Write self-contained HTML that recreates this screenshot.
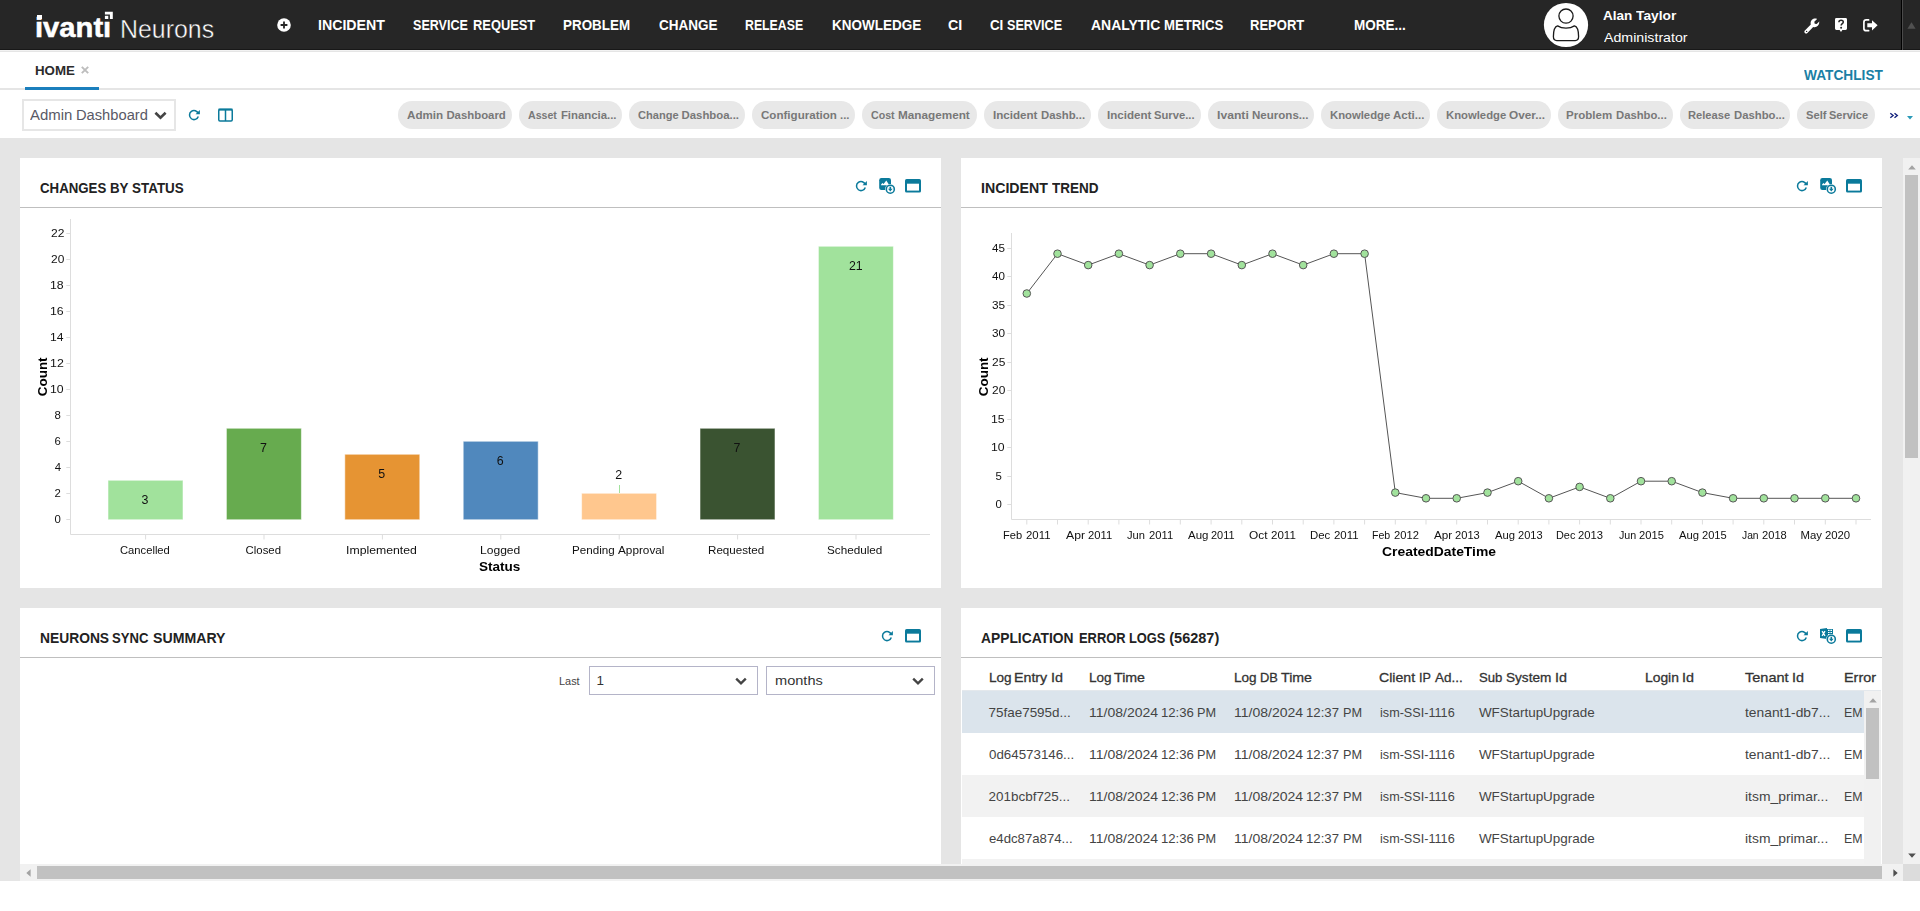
<!DOCTYPE html>
<html lang="en">
<head>
<meta charset="utf-8">
<title>Ivanti Neurons - Admin Dashboard</title>
<style>
*{box-sizing:border-box;margin:0;padding:0}
html,body{width:1920px;height:911px;overflow:hidden;background:#fff}
body{position:relative;font-family:"Liberation Sans",sans-serif;color:#333}
.t{position:absolute;white-space:pre;line-height:1;transform-origin:0 0;font-family:"Liberation Sans",sans-serif}
.abs{position:absolute}
#hdr{position:absolute;left:0;top:0;width:1920px;height:50px;background:#262626;color:#fff;border-bottom:1px solid #181818}
#hdr .t{color:#fff}
#work{position:absolute;left:0;top:138px;width:1920px;height:743px;background:#e5e5e5;overflow:hidden}
.panel{position:absolute;background:#fff}
.phl{position:absolute;left:0;right:0;top:49px;height:1px;background:#bfbfbf}
.pill{position:absolute;top:101px;height:28px;border-radius:14px;background:#e8e8e8}
.pill .t{color:#777}
svg{position:absolute;overflow:visible}
.row{position:absolute;left:962px;width:902px;height:42px}
</style>
</head>
<body>

<div id="hdr">
<span class="t" style="left:35.31px;top:12px;font-size:27.60px;line-height:31px;font-weight:700;transform:scaleX(1.0577);-webkit-text-stroke:0.5px #fff;">ivantı</span>
<svg style="left:104px;top:11px" width="10" height="9" viewBox="104 11 10 9"><path d="M104.900 11.800H112.800V19H109.900V14.400H104.900Z" fill="#fff"/><rect x="104.900" y="15.800" width="3.400" height="3.200" fill="#fff"/></svg>
<div class="abs" style="left:36.500px;top:14.600px;width:5.200px;height:4.800px;background:#fff"></div>
<span class="t" style="left:119.56px;top:15px;font-size:25.90px;line-height:28px;transform:scaleX(0.9620);-webkit-text-stroke:0.45px #262626;">Neurons</span>
<svg style="left:277px;top:18px" width="14" height="14" viewBox="0 0 14 14"><circle cx="7" cy="7" r="6.8" fill="#fff"/><path d="M7 3.6V10.4M3.6 7H10.4" stroke="#262626" stroke-width="1.8"/></svg>
<span class="t" style="left:318.04px;top:17px;font-size:14.49px;line-height:16px;font-weight:700;transform:scaleX(0.9791);">INCIDENT</span>
<span class="t" style="left:413.16px;top:17px;font-size:14.49px;line-height:16px;font-weight:700;transform:scaleX(0.8677);">SERVICE</span><span class="t" style="left:472.66px;top:17px;font-size:14.49px;line-height:16px;font-weight:700;transform:scaleX(0.8889);">REQUEST</span>
<span class="t" style="left:562.86px;top:17px;font-size:14.49px;line-height:16px;font-weight:700;transform:scaleX(0.9260);">PROBLEM</span>
<span class="t" style="left:658.58px;top:17px;font-size:14.49px;line-height:16px;font-weight:700;transform:scaleX(0.9334);">CHANGE</span>
<span class="t" style="left:745.08px;top:17px;font-size:14.49px;line-height:16px;font-weight:700;transform:scaleX(0.8500);">RELEASE</span>
<span class="t" style="left:831.60px;top:17px;font-size:14.49px;line-height:16px;font-weight:700;transform:scaleX(0.9311);">KNOWLEDGE</span>
<span class="t" style="left:948.07px;top:17px;font-size:14.49px;line-height:16px;font-weight:700;transform:scaleX(0.9829);">CI</span>
<span class="t" style="left:989.80px;top:17px;font-size:14.49px;line-height:16px;font-weight:700;transform:scaleX(0.9200);">CI</span><span class="t" style="left:1007.36px;top:17px;font-size:14.49px;line-height:16px;font-weight:700;transform:scaleX(0.8697);">SERVICE</span>
<span class="t" style="left:1090.81px;top:17px;font-size:14.49px;line-height:16px;font-weight:700;transform:scaleX(0.9630);">ANALYTIC</span><span class="t" style="left:1164.34px;top:17px;font-size:14.49px;line-height:16px;font-weight:700;transform:scaleX(0.9087);">METRICS</span>
<span class="t" style="left:1250.46px;top:17px;font-size:14.49px;line-height:16px;font-weight:700;transform:scaleX(0.8993);">REPORT</span>
<span class="t" style="left:1354.30px;top:17px;font-size:14.49px;line-height:16px;font-weight:700;transform:scaleX(0.9334);">MORE...</span>
<svg style="left:1544px;top:3px" width="44" height="44" viewBox="0 0 44 44"><circle cx="22" cy="22" r="22.1" fill="#fff"/>
<circle cx="22" cy="13.1" r="7.1" fill="none" stroke="#1a1a1a" stroke-width="1.3"/>
<path d="M13.6 22.9C10.6 23.6 9.4 27.5 9.4 33.6C9.4 36.2 10.6 37.6 12.8 37.6H31.2C33.4 37.6 34.6 36.2 34.6 33.6C34.6 27.5 33.4 23.6 30.4 22.9C28.2 24.4 25.4 25.2 22 25.2C18.6 25.2 15.8 24.4 13.6 22.9Z" fill="none" stroke="#1a1a1a" stroke-width="1.3" stroke-linejoin="round"/></svg>
<span class="t" style="left:1603.48px;top:8px;font-size:13.45px;line-height:15px;font-weight:700;transform:scaleX(1.0080);">Alan</span><span class="t" style="left:1636.45px;top:8px;font-size:13.45px;line-height:15px;font-weight:700;transform:scaleX(1.0239);">Taylor</span>
<span class="t" style="left:1603.71px;top:30px;font-size:13.45px;line-height:15px;transform:scaleX(1.0557);">Administrator</span>
<svg style="left:1804px;top:17.5px" width="16" height="16" viewBox="0 0 16 16"><path d="M15.2 4.6c0 2.6-2.1 4.6-4.6 4.6-.5 0-1-.1-1.400-.2L3.400 14.900c-.7.7-1.800.7-2.500 0s-.7-1.800 0-2.500L6.800 6.500C6.700 6 6.600 5.600 6.600 5.100 6.600 2.500 8.700.5 11.200.5c.7 0 1.300.1 1.900.4L10.300 3.700l.4 2 2 .4 2.800-2.800c-.2.400-.3.800-.3 1.300zM2.600 14.100a.7.7 0 1 0 0-1.400.7.7 0 0 0 0 1.400z" fill="#fff" fill-rule="evenodd"/></svg>
<svg style="left:1835px;top:18.400px" width="12" height="15" viewBox="0 0 12 15"><path d="M1.400 0H10.600Q12 0 12 1.400V10.600Q12 12 10.600 12H7.400L6 13.900 4.600 12H1.400Q0 12 0 10.600V1.400Q0 0 1.400 0Z" fill="#fff"/>
<path d="M3.900 4.300C3.900 2.900 4.800 2.200 6.100 2.200 7.400 2.200 8.300 2.900 8.300 4 8.300 5.700 6.100 5.600 6.100 7.600" fill="none" stroke="#262626" stroke-width="1.500"/><circle cx="6.100" cy="9.700" r="1" fill="#262626"/></svg>
<svg style="left:1862.5px;top:19px" width="15" height="13" viewBox="0 0 15 13"><path d="M5.600 0.900H3.200Q0.900 0.900 0.900 3.200V9.400Q0.900 11.700 3.200 11.700H5.600" fill="none" stroke="#fff" stroke-width="1.700" stroke-linecap="round"/>
<path d="M4.300 4.300H9V1.200L14.600 6.300 9 11.400V8.300H4.300Z" fill="#fff"/></svg>
<div class="abs" style="left:1901px;top:0;width:1px;height:50px;background:#000"></div>
<div class="abs" style="left:1902px;top:0;width:1px;height:50px;background:#4a4a4a"></div>
<svg style="left:1907px;top:22px" width="9" height="7" viewBox="0 0 9 7"><path d="M4.500 0.300L8.600 6.800H0.400Z" fill="#505050"/></svg>
</div>
<div class="abs" style="left:0;top:50px;width:1920px;height:1px;background:#f2f2f2"></div>
<div class="abs" style="left:0;top:51px;width:1920px;height:1px;background:#e5e5e5"></div>
<div class="abs" style="left:0;top:88px;width:1920px;height:2px;background:#e5e5e5"></div>
<div class="abs" style="left:25px;top:87px;width:74px;height:3px;background:#1b7fbd"></div>
<span class="t" style="left:35.18px;top:63px;font-size:13.45px;line-height:15px;font-weight:700;transform:scaleX(0.9901);color:#2b2b2b;">HOME</span>
<svg style="left:81px;top:66px" width="8" height="8" viewBox="0 0 8 8"><path d="M0.800 0.800L7.200 7.200M7.200 0.800L0.800 7.200" stroke="#bdbdbd" stroke-width="1.900"/></svg>
<span class="t" style="left:1803.88px;top:67px;font-size:14.49px;line-height:16px;font-weight:700;transform:scaleX(0.9464);color:#1b7fa5;">WATCHLIST</span>
<div class="abs" style="left:22px;top:99px;width:154px;height:32px;border:2px solid #e6e6e6;background:#fff"></div>
<span class="t" style="left:29.97px;top:107px;font-size:14.49px;line-height:16px;transform:scaleX(1.0326);color:#595966;">Admin</span><span class="t" style="left:76.12px;top:107px;font-size:14.49px;line-height:16px;transform:scaleX(1.0141);color:#595966;">Dashboard</span>
<svg style="left:154px;top:111px" width="13" height="9" viewBox="0 0 13 9"><path d="M1.400 1.800L6.500 6.800 11.600 1.800" fill="none" stroke="#444" stroke-width="2.600"/></svg>
<svg style="left:186.6px;top:108px" width="14" height="14" viewBox="-7 -7 14 14"><path d="M4.300 -1.300A4.500 4.500 0 1 0 4.300 1.500" fill="none" stroke="#0b7a9b" stroke-width="1.500"/><path d="M5.900 -5.100V-0.700H1.500Z" fill="#0b7a9b"/></svg>
<svg style="left:218px;top:108px" width="15" height="14" viewBox="0 0 15 14"><rect x="0.750" y="1.500" width="13.500" height="11.500" rx="1.200" fill="none" stroke="#0b7a9b" stroke-width="1.500"/><path d="M0.500 1.500H14.500" stroke="#0b7a9b" stroke-width="2"/><path d="M7.500 1.500V13" stroke="#0b7a9b" stroke-width="1.500"/></svg>
<div class="pill" style="left:398.0px;width:113.8px"></div>
<span class="t" style="left:407.15px;top:109px;font-size:11.38px;line-height:12px;font-weight:700;transform:scaleX(1.0218);color:#787878;">Admin</span><span class="t" style="left:446.38px;top:109px;font-size:11.38px;line-height:12px;font-weight:700;color:#787878;">Dashboard</span>
<div class="pill" style="left:519.2px;width:102.6px"></div>
<span class="t" style="left:528.26px;top:109px;font-size:11.38px;line-height:12px;font-weight:700;transform:scaleX(0.9313);color:#787878;">Asset</span><span class="t" style="left:560.91px;top:109px;font-size:11.38px;line-height:12px;font-weight:700;color:#787878;">Financia...</span>
<div class="pill" style="left:629.2px;width:115.6px"></div>
<span class="t" style="left:637.72px;top:109px;font-size:11.38px;line-height:12px;font-weight:700;transform:scaleX(0.9734);color:#787878;">Change</span><span class="t" style="left:681.53px;top:109px;font-size:11.38px;line-height:12px;font-weight:700;color:#787878;">Dashboa...</span>
<div class="pill" style="left:752.0px;width:102.7px"></div>
<span class="t" style="left:760.50px;top:109px;font-size:11.38px;line-height:12px;font-weight:700;transform:scaleX(1.0180);color:#787878;">Configuration</span><span class="t" style="left:839.85px;top:109px;font-size:11.38px;line-height:12px;font-weight:700;transform:scaleX(0.9959);color:#787878;">...</span>
<div class="pill" style="left:862.0px;width:114.8px"></div>
<span class="t" style="left:870.61px;top:109px;font-size:11.38px;line-height:12px;font-weight:700;transform:scaleX(0.9358);color:#787878;">Cost</span><span class="t" style="left:898.13px;top:109px;font-size:11.38px;line-height:12px;font-weight:700;transform:scaleX(1.0321);color:#787878;">Management</span>
<div class="pill" style="left:984.2px;width:106.6px"></div>
<span class="t" style="left:992.66px;top:109px;font-size:11.38px;line-height:12px;font-weight:700;transform:scaleX(1.0197);color:#787878;">Incident</span><span class="t" style="left:1040.88px;top:109px;font-size:11.38px;line-height:12px;font-weight:700;transform:scaleX(0.9950);color:#787878;">Dashb...</span>
<div class="pill" style="left:1098.0px;width:102.8px"></div>
<span class="t" style="left:1106.51px;top:109px;font-size:11.38px;line-height:12px;font-weight:700;transform:scaleX(1.0165);color:#787878;">Incident</span><span class="t" style="left:1154.36px;top:109px;font-size:11.38px;line-height:12px;font-weight:700;transform:scaleX(0.9859);color:#787878;">Surve...</span>
<div class="pill" style="left:1208.0px;width:106.2px"></div>
<span class="t" style="left:1216.62px;top:109px;font-size:11.38px;line-height:12px;font-weight:700;transform:scaleX(1.0709);color:#787878;">Ivanti</span><span class="t" style="left:1252.15px;top:109px;font-size:11.38px;line-height:12px;font-weight:700;transform:scaleX(1.0147);color:#787878;">Neurons...</span>
<div class="pill" style="left:1321.2px;width:108.8px"></div>
<span class="t" style="left:1330.13px;top:109px;font-size:11.38px;line-height:12px;font-weight:700;transform:scaleX(0.9921);color:#787878;">Knowledge</span><span class="t" style="left:1392.94px;top:109px;font-size:11.38px;line-height:12px;font-weight:700;transform:scaleX(1.0123);color:#787878;">Acti...</span>
<div class="pill" style="left:1437.2px;width:113.6px"></div>
<span class="t" style="left:1445.65px;top:109px;font-size:11.38px;line-height:12px;font-weight:700;transform:scaleX(0.9923);color:#787878;">Knowledge</span><span class="t" style="left:1508.87px;top:109px;font-size:11.38px;line-height:12px;font-weight:700;transform:scaleX(1.0374);color:#787878;">Over...</span>
<div class="pill" style="left:1558.0px;width:114.8px"></div>
<span class="t" style="left:1566.44px;top:109px;font-size:11.38px;line-height:12px;font-weight:700;transform:scaleX(1.0148);color:#787878;">Problem</span><span class="t" style="left:1616.01px;top:109px;font-size:11.38px;line-height:12px;font-weight:700;transform:scaleX(0.9918);color:#787878;">Dashbo...</span>
<div class="pill" style="left:1680.2px;width:109.8px"></div>
<span class="t" style="left:1688.40px;top:109px;font-size:11.38px;line-height:12px;font-weight:700;transform:scaleX(0.9800);color:#787878;">Release</span><span class="t" style="left:1733.79px;top:109px;font-size:11.38px;line-height:12px;font-weight:700;transform:scaleX(0.9941);color:#787878;">Dashbo...</span>
<div class="pill" style="left:1797.0px;width:78.0px"></div>
<span class="t" style="left:1805.73px;top:109px;font-size:11.38px;line-height:12px;font-weight:700;transform:scaleX(0.9819);color:#787878;">Self</span><span class="t" style="left:1829.05px;top:109px;font-size:11.38px;line-height:12px;font-weight:700;transform:scaleX(0.9653);color:#787878;">Service</span>
<svg style="left:1889px;top:112px" width="10" height="7" viewBox="1889 112 10 7"><path d="M1890.300 113.200L1893.100 115.500 1890.300 117.800M1894.500 113.200L1897.300 115.500 1894.500 117.800" fill="none" stroke="#16237e" stroke-width="1.400"/></svg>
<svg style="left:1907px;top:115.500px" width="6" height="4" viewBox="0 0 6 4"><path d="M0 0H6L3 3.600Z" fill="#2a9ab8"/></svg>
<div id="work"></div>
<div class="panel" style="left:20px;top:158px;width:921px;height:430px"><div class="phl"></div></div>
<span class="t" style="left:40.37px;top:180px;font-size:14.49px;line-height:16px;font-weight:700;transform:scaleX(0.9149);color:#222;">CHANGES</span><span class="t" style="left:109.95px;top:180px;font-size:14.49px;line-height:16px;font-weight:700;transform:scaleX(0.9200);color:#222;">BY</span><span class="t" style="left:131.97px;top:180px;font-size:14.49px;line-height:16px;font-weight:700;transform:scaleX(0.9278);color:#222;">STATUS</span>
<svg style="left:853.8px;top:179px" width="14" height="14" viewBox="-7 -7 14 14"><path d="M4.300 -1.300A4.500 4.500 0 1 0 4.300 1.500" fill="none" stroke="#0b7a9b" stroke-width="1.500"/><path d="M5.900 -5.100V-0.700H1.500Z" fill="#0b7a9b"/></svg>
<svg style="left:879px;top:178px" width="17" height="17" viewBox="0 0 17 17"><rect x="0.200" y="0" width="11.800" height="12" rx="2.200" fill="#0b7a9b"/><path d="M2 6.700L3.300 4.900 4.600 6.100 7.300 2.400 10 6.700V7.300H2Z" fill="#fff"/><circle cx="11.300" cy="11.200" r="5.300" fill="#fff"/><circle cx="11.300" cy="11.200" r="4" fill="#fff" stroke="#0b7a9b" stroke-width="1.600"/><path d="M10.500 8.700H12.100V10.800H13.600L11.300 13.600 9 10.800H10.500Z" fill="#0b7a9b"/></svg>
<svg style="left:905px;top:179px" width="16" height="14" viewBox="0 0 16 14"><rect x="0" y="0" width="16" height="13.600" rx="1.600" fill="#0b7a9b"/><rect x="2" y="4.700" width="12" height="6.900" fill="#fff"/></svg>
<div class="panel" style="left:961px;top:158px;width:921px;height:430px"><div class="phl"></div></div>
<span class="t" style="left:981.13px;top:180px;font-size:14.49px;line-height:16px;font-weight:700;transform:scaleX(0.9775);color:#222;">INCIDENT</span><span class="t" style="left:1051.63px;top:180px;font-size:14.49px;line-height:16px;font-weight:700;transform:scaleX(0.9339);color:#222;">TREND</span>
<svg style="left:1794.8px;top:179px" width="14" height="14" viewBox="-7 -7 14 14"><path d="M4.300 -1.300A4.500 4.500 0 1 0 4.300 1.500" fill="none" stroke="#0b7a9b" stroke-width="1.500"/><path d="M5.900 -5.100V-0.700H1.500Z" fill="#0b7a9b"/></svg>
<svg style="left:1820px;top:178px" width="17" height="17" viewBox="0 0 17 17"><rect x="0.200" y="0" width="11.800" height="12" rx="2.200" fill="#0b7a9b"/><path d="M2 6.700L3.300 4.900 4.600 6.100 7.300 2.400 10 6.700V7.300H2Z" fill="#fff"/><circle cx="11.300" cy="11.200" r="5.300" fill="#fff"/><circle cx="11.300" cy="11.200" r="4" fill="#fff" stroke="#0b7a9b" stroke-width="1.600"/><path d="M10.500 8.700H12.100V10.800H13.600L11.300 13.600 9 10.800H10.500Z" fill="#0b7a9b"/></svg>
<svg style="left:1846px;top:179px" width="16" height="14" viewBox="0 0 16 14"><rect x="0" y="0" width="16" height="13.600" rx="1.600" fill="#0b7a9b"/><rect x="2" y="4.700" width="12" height="6.900" fill="#fff"/></svg>
<div class="panel" style="left:20px;top:608px;width:921px;height:256px"><div class="phl"></div></div>
<span class="t" style="left:39.78px;top:630px;font-size:14.49px;line-height:16px;font-weight:700;transform:scaleX(0.9538);color:#222;">NEURONS</span><span class="t" style="left:112.37px;top:630px;font-size:14.49px;line-height:16px;font-weight:700;transform:scaleX(0.9053);color:#222;">SYNC</span><span class="t" style="left:152.97px;top:630px;font-size:14.49px;line-height:16px;font-weight:700;transform:scaleX(0.9756);color:#222;">SUMMARY</span>
<svg style="left:880px;top:629px" width="14" height="14" viewBox="-7 -7 14 14"><path d="M4.300 -1.300A4.500 4.500 0 1 0 4.300 1.500" fill="none" stroke="#0b7a9b" stroke-width="1.500"/><path d="M5.900 -5.100V-0.700H1.500Z" fill="#0b7a9b"/></svg>
<svg style="left:905px;top:629px" width="16" height="14" viewBox="0 0 16 14"><rect x="0" y="0" width="16" height="13.600" rx="1.600" fill="#0b7a9b"/><rect x="2" y="4.700" width="12" height="6.900" fill="#fff"/></svg>
<div class="panel" style="left:961px;top:608px;width:921px;height:256px"><div class="phl"></div></div>
<span class="t" style="left:980.94px;top:630px;font-size:14.49px;line-height:16px;font-weight:700;transform:scaleX(0.9533);color:#222;">APPLICATION</span><span class="t" style="left:1078.64px;top:630px;font-size:14.49px;line-height:16px;font-weight:700;transform:scaleX(0.8905);color:#222;">ERROR</span><span class="t" style="left:1129.49px;top:630px;font-size:14.49px;line-height:16px;font-weight:700;transform:scaleX(0.8882);color:#222;">LOGS</span><span class="t" style="left:1169.30px;top:630px;font-size:14.49px;line-height:16px;font-weight:700;color:#222;">(56287)</span>
<svg style="left:1794.8px;top:629px" width="14" height="14" viewBox="-7 -7 14 14"><path d="M4.300 -1.300A4.500 4.500 0 1 0 4.300 1.500" fill="none" stroke="#0b7a9b" stroke-width="1.500"/><path d="M5.900 -5.100V-0.700H1.500Z" fill="#0b7a9b"/></svg>
<svg style="left:1820px;top:628px" width="17" height="17" viewBox="0 0 17 17"><path d="M0 1.100L7 0V11L0 9.900Z" fill="#0b7a9b"/><rect x="6.500" y="1" width="6.500" height="8" fill="#0b7a9b"/><path d="M8 2.400H9.600M10.400 2.400H12M8 4.500H9.600M10.400 4.500H12M8 6.600H9.600" stroke="#fff" stroke-width="1.100"/><path d="M2.100 3.200L5 7.800M5 3.200L2.100 7.800" stroke="#fff" stroke-width="1.300"/><circle cx="11.300" cy="11.200" r="5.300" fill="#fff"/><circle cx="11.300" cy="11.200" r="4" fill="#fff" stroke="#0b7a9b" stroke-width="1.600"/><path d="M10.500 8.700H12.100V10.800H13.600L11.300 13.600 9 10.800H10.500Z" fill="#0b7a9b"/></svg>
<svg style="left:1846px;top:629px" width="16" height="14" viewBox="0 0 16 14"><rect x="0" y="0" width="16" height="13.600" rx="1.600" fill="#0b7a9b"/><rect x="2" y="4.700" width="12" height="6.900" fill="#fff"/></svg>
<div id="charts" style="position:absolute;left:0;top:0;width:1903px;height:600px;will-change:transform">
<svg style="left:0;top:0" width="960" height="600" viewBox="0 0 960 600">
<path d="M70.500 219V534.500H930" fill="none" stroke="#dddddd" stroke-width="1"/>
<path d="M66.300 519.5H70.500" stroke="#dddddd"/>
<path d="M66.300 493.5H70.500" stroke="#dddddd"/>
<path d="M66.300 467.5H70.500" stroke="#dddddd"/>
<path d="M66.300 441.5H70.500" stroke="#dddddd"/>
<path d="M66.300 415.5H70.500" stroke="#dddddd"/>
<path d="M66.300 389.5H70.500" stroke="#dddddd"/>
<path d="M66.300 363.5H70.500" stroke="#dddddd"/>
<path d="M66.300 337.5H70.500" stroke="#dddddd"/>
<path d="M66.300 311.5H70.500" stroke="#dddddd"/>
<path d="M66.300 285.5H70.500" stroke="#dddddd"/>
<path d="M66.300 259.5H70.500" stroke="#dddddd"/>
<path d="M66.300 233.5H70.500" stroke="#dddddd"/>
<path d="M145.6 534.500V539.500" stroke="#dddddd"/>
<rect x="108.0" y="480.25" width="75" height="39.5" fill="#a1e29c" stroke="#fff" stroke-opacity=".55" stroke-width="1"/>
<path d="M264.0 534.500V539.500" stroke="#dddddd"/>
<rect x="226.4" y="428.25" width="75" height="91.5" fill="#67ab4f" stroke="#fff" stroke-opacity=".55" stroke-width="1"/>
<path d="M382.4 534.500V539.500" stroke="#dddddd"/>
<rect x="344.8" y="454.25" width="75" height="65.5" fill="#e69433" stroke="#fff" stroke-opacity=".55" stroke-width="1"/>
<path d="M500.8 534.500V539.500" stroke="#dddddd"/>
<rect x="463.2" y="441.25" width="75" height="78.5" fill="#5088bd" stroke="#fff" stroke-opacity=".55" stroke-width="1"/>
<path d="M619.2 534.500V539.500" stroke="#dddddd"/>
<rect x="581.6" y="493.25" width="75" height="26.5" fill="#ffc78e" stroke="#fff" stroke-opacity=".55" stroke-width="1"/>
<path d="M737.6 534.500V539.500" stroke="#dddddd"/>
<rect x="700.0" y="428.25" width="75" height="91.5" fill="#3a5331" stroke="#fff" stroke-opacity=".55" stroke-width="1"/>
<path d="M856.0 534.500V539.500" stroke="#dddddd"/>
<rect x="818.4" y="246.25" width="75" height="273.5" fill="#a1e29c" stroke="#fff" stroke-opacity=".55" stroke-width="1"/>
<path d="M619.500 485V493" stroke="#a1e29c" stroke-width="1"/>
</svg>
<span class="t" style="left:54.59px;top:513px;font-size:11.38px;line-height:12px;color:#111;">0</span>
<span class="t" style="left:54.59px;top:487px;font-size:11.38px;line-height:12px;color:#111;">2</span>
<span class="t" style="left:54.63px;top:461px;font-size:11.38px;line-height:12px;color:#111;">4</span>
<span class="t" style="left:54.55px;top:435px;font-size:11.38px;line-height:12px;color:#111;">6</span>
<span class="t" style="left:54.59px;top:409px;font-size:11.38px;line-height:12px;color:#111;">8</span>
<span class="t" style="left:50.46px;top:383px;font-size:11.38px;line-height:12px;transform:scaleX(1.0758);color:#111;">10</span>
<span class="t" style="left:50.42px;top:357px;font-size:11.38px;line-height:12px;transform:scaleX(1.0881);color:#111;">12</span>
<span class="t" style="left:50.43px;top:331px;font-size:11.38px;line-height:12px;transform:scaleX(1.0653);color:#111;">14</span>
<span class="t" style="left:50.44px;top:305px;font-size:11.38px;line-height:12px;transform:scaleX(1.0811);color:#111;">16</span>
<span class="t" style="left:50.45px;top:279px;font-size:11.38px;line-height:12px;transform:scaleX(1.0806);color:#111;">18</span>
<span class="t" style="left:51.08px;top:253px;font-size:11.38px;line-height:12px;transform:scaleX(1.0485);color:#111;">20</span>
<span class="t" style="left:51.05px;top:227px;font-size:11.38px;line-height:12px;transform:scaleX(1.0592);color:#111;">22</span>
<span class="t" style="left:119.80px;top:544px;font-size:11.38px;line-height:12px;transform:scaleX(0.9850);color:#111;">Cancelled</span>
<span class="t" style="left:141.59px;top:493px;font-size:12.42px;line-height:14px;color:#111;">3</span>
<span class="t" style="left:245.59px;top:544px;font-size:11.38px;line-height:12px;color:#111;">Closed</span>
<span class="t" style="left:259.95px;top:441px;font-size:12.42px;line-height:14px;color:#111;">7</span>
<span class="t" style="left:346.20px;top:544px;font-size:11.38px;line-height:12px;transform:scaleX(1.0786);color:#111;">Implemented</span>
<span class="t" style="left:378.37px;top:467px;font-size:12.42px;line-height:14px;color:#111;">5</span>
<span class="t" style="left:479.84px;top:544px;font-size:11.38px;line-height:12px;transform:scaleX(1.0609);color:#111;">Logged</span>
<span class="t" style="left:496.71px;top:454px;font-size:12.42px;line-height:14px;color:#111;">6</span>
<span class="t" style="left:572.42px;top:544px;font-size:11.38px;line-height:12px;transform:scaleX(1.0228);color:#111;">Pending</span><span class="t" style="left:617.84px;top:544px;font-size:11.38px;line-height:12px;transform:scaleX(1.0337);color:#111;">Approval</span>
<span class="t" style="left:615.15px;top:468px;font-size:12.42px;line-height:14px;color:#111;">2</span>
<span class="t" style="left:708.43px;top:544px;font-size:11.38px;line-height:12px;transform:scaleX(1.0215);color:#111;">Requested</span>
<span class="t" style="left:733.55px;top:441px;font-size:12.42px;line-height:14px;color:#111;">7</span>
<span class="t" style="left:827.41px;top:544px;font-size:11.38px;line-height:12px;transform:scaleX(1.0284);color:#111;">Scheduled</span>
<span class="t" style="left:848.87px;top:259px;font-size:12.42px;line-height:14px;transform:scaleX(0.9946);color:#111;">21</span>
<span class="t" style="left:479.32px;top:559px;font-size:13.45px;line-height:15px;font-weight:700;transform:scaleX(1.0069);color:#000;">Status</span>
<span class="t" style="left:22.70px;top:369.91px;font-size:13.45px;font-weight:700;color:#000;transform:rotate(-90deg) scaleX(0.9977);transform-origin:19.60px 6.59px">Count</span>
<svg style="left:0;top:0" width="1920" height="600" viewBox="0 0 1920 600">
<path d="M1011.500 233V519.500H1871" fill="none" stroke="#dddddd"/>
<path d="M1007.300 504.5H1011.500" stroke="#dddddd"/>
<path d="M1007.300 476.5H1011.500" stroke="#dddddd"/>
<path d="M1007.300 447.5H1011.500" stroke="#dddddd"/>
<path d="M1007.300 419.5H1011.500" stroke="#dddddd"/>
<path d="M1007.300 390.5H1011.500" stroke="#dddddd"/>
<path d="M1007.300 362.5H1011.500" stroke="#dddddd"/>
<path d="M1007.300 333.5H1011.500" stroke="#dddddd"/>
<path d="M1007.300 305.5H1011.500" stroke="#dddddd"/>
<path d="M1007.300 276.5H1011.500" stroke="#dddddd"/>
<path d="M1007.300 248.5H1011.500" stroke="#dddddd"/>
<path d="M1026.8 519.500V524.500" stroke="#dddddd"/>
<path d="M1057.5 519.500V524.500" stroke="#dddddd"/>
<path d="M1088.2 519.500V524.500" stroke="#dddddd"/>
<path d="M1118.9 519.500V524.500" stroke="#dddddd"/>
<path d="M1149.6 519.500V524.500" stroke="#dddddd"/>
<path d="M1180.3 519.500V524.500" stroke="#dddddd"/>
<path d="M1211.1 519.500V524.500" stroke="#dddddd"/>
<path d="M1241.8 519.500V524.500" stroke="#dddddd"/>
<path d="M1272.5 519.500V524.500" stroke="#dddddd"/>
<path d="M1303.2 519.500V524.500" stroke="#dddddd"/>
<path d="M1333.9 519.500V524.500" stroke="#dddddd"/>
<path d="M1364.6 519.500V524.500" stroke="#dddddd"/>
<path d="M1395.3 519.500V524.500" stroke="#dddddd"/>
<path d="M1426.0 519.500V524.500" stroke="#dddddd"/>
<path d="M1456.7 519.500V524.500" stroke="#dddddd"/>
<path d="M1487.5 519.500V524.500" stroke="#dddddd"/>
<path d="M1518.2 519.500V524.500" stroke="#dddddd"/>
<path d="M1548.9 519.500V524.500" stroke="#dddddd"/>
<path d="M1579.6 519.500V524.500" stroke="#dddddd"/>
<path d="M1610.3 519.500V524.500" stroke="#dddddd"/>
<path d="M1641.0 519.500V524.500" stroke="#dddddd"/>
<path d="M1671.7 519.500V524.500" stroke="#dddddd"/>
<path d="M1702.4 519.500V524.500" stroke="#dddddd"/>
<path d="M1733.1 519.500V524.500" stroke="#dddddd"/>
<path d="M1763.8 519.500V524.500" stroke="#dddddd"/>
<path d="M1794.5 519.500V524.500" stroke="#dddddd"/>
<path d="M1825.3 519.500V524.500" stroke="#dddddd"/>
<path d="M1856.0 519.500V524.500" stroke="#dddddd"/>
<path d="M1026.8 293.5L1057.5 253.7L1088.2 265.1L1118.9 253.7L1149.6 265.1L1180.3 253.7L1211.1 253.7L1241.8 265.1L1272.5 253.7L1303.2 265.1L1333.9 253.7L1364.6 253.7L1395.3 492.6L1426.0 498.3L1456.7 498.3L1487.5 492.6L1518.2 481.2L1548.9 498.3L1579.6 486.9L1610.3 498.3L1641.0 481.2L1671.7 481.2L1702.4 492.6L1733.1 498.3L1763.8 498.3L1794.5 498.3L1825.3 498.3L1856.0 498.3" fill="none" stroke="#555" stroke-width="1"/>
<circle cx="1026.8" cy="293.5" r="3.800" fill="#a1e29c" stroke="#555" stroke-width="1"/>
<circle cx="1057.5" cy="253.7" r="3.800" fill="#a1e29c" stroke="#555" stroke-width="1"/>
<circle cx="1088.2" cy="265.1" r="3.800" fill="#a1e29c" stroke="#555" stroke-width="1"/>
<circle cx="1118.9" cy="253.7" r="3.800" fill="#a1e29c" stroke="#555" stroke-width="1"/>
<circle cx="1149.6" cy="265.1" r="3.800" fill="#a1e29c" stroke="#555" stroke-width="1"/>
<circle cx="1180.3" cy="253.7" r="3.800" fill="#a1e29c" stroke="#555" stroke-width="1"/>
<circle cx="1211.1" cy="253.7" r="3.800" fill="#a1e29c" stroke="#555" stroke-width="1"/>
<circle cx="1241.8" cy="265.1" r="3.800" fill="#a1e29c" stroke="#555" stroke-width="1"/>
<circle cx="1272.5" cy="253.7" r="3.800" fill="#a1e29c" stroke="#555" stroke-width="1"/>
<circle cx="1303.2" cy="265.1" r="3.800" fill="#a1e29c" stroke="#555" stroke-width="1"/>
<circle cx="1333.9" cy="253.7" r="3.800" fill="#a1e29c" stroke="#555" stroke-width="1"/>
<circle cx="1364.6" cy="253.7" r="3.800" fill="#a1e29c" stroke="#555" stroke-width="1"/>
<circle cx="1395.3" cy="492.6" r="3.800" fill="#a1e29c" stroke="#555" stroke-width="1"/>
<circle cx="1426.0" cy="498.3" r="3.800" fill="#a1e29c" stroke="#555" stroke-width="1"/>
<circle cx="1456.7" cy="498.3" r="3.800" fill="#a1e29c" stroke="#555" stroke-width="1"/>
<circle cx="1487.5" cy="492.6" r="3.800" fill="#a1e29c" stroke="#555" stroke-width="1"/>
<circle cx="1518.2" cy="481.2" r="3.800" fill="#a1e29c" stroke="#555" stroke-width="1"/>
<circle cx="1548.9" cy="498.3" r="3.800" fill="#a1e29c" stroke="#555" stroke-width="1"/>
<circle cx="1579.6" cy="486.9" r="3.800" fill="#a1e29c" stroke="#555" stroke-width="1"/>
<circle cx="1610.3" cy="498.3" r="3.800" fill="#a1e29c" stroke="#555" stroke-width="1"/>
<circle cx="1641.0" cy="481.2" r="3.800" fill="#a1e29c" stroke="#555" stroke-width="1"/>
<circle cx="1671.7" cy="481.2" r="3.800" fill="#a1e29c" stroke="#555" stroke-width="1"/>
<circle cx="1702.4" cy="492.6" r="3.800" fill="#a1e29c" stroke="#555" stroke-width="1"/>
<circle cx="1733.1" cy="498.3" r="3.800" fill="#a1e29c" stroke="#555" stroke-width="1"/>
<circle cx="1763.8" cy="498.3" r="3.800" fill="#a1e29c" stroke="#555" stroke-width="1"/>
<circle cx="1794.5" cy="498.3" r="3.800" fill="#a1e29c" stroke="#555" stroke-width="1"/>
<circle cx="1825.3" cy="498.3" r="3.800" fill="#a1e29c" stroke="#555" stroke-width="1"/>
<circle cx="1856.0" cy="498.3" r="3.800" fill="#a1e29c" stroke="#555" stroke-width="1"/>
</svg>
<span class="t" style="left:995.59px;top:498px;font-size:11.38px;line-height:12px;color:#111;">0</span>
<span class="t" style="left:995.60px;top:470px;font-size:11.38px;line-height:12px;color:#111;">5</span>
<span class="t" style="left:991.46px;top:441px;font-size:11.38px;line-height:12px;transform:scaleX(1.0758);color:#111;">10</span>
<span class="t" style="left:991.49px;top:413px;font-size:11.38px;line-height:12px;transform:scaleX(1.0790);color:#111;">15</span>
<span class="t" style="left:992.08px;top:384px;font-size:11.38px;line-height:12px;transform:scaleX(1.0485);color:#111;">20</span>
<span class="t" style="left:992.11px;top:356px;font-size:11.38px;line-height:12px;transform:scaleX(1.0516);color:#111;">25</span>
<span class="t" style="left:992.20px;top:327px;font-size:11.38px;line-height:12px;transform:scaleX(1.0362);color:#111;">30</span>
<span class="t" style="left:992.23px;top:299px;font-size:11.38px;line-height:12px;transform:scaleX(1.0391);color:#111;">35</span>
<span class="t" style="left:992.43px;top:270px;font-size:11.38px;line-height:12px;transform:scaleX(1.0212);color:#111;">40</span>
<span class="t" style="left:992.46px;top:242px;font-size:11.38px;line-height:12px;transform:scaleX(1.0241);color:#111;">45</span>
<span class="t" style="left:1003.34px;top:529px;font-size:11.38px;line-height:12px;transform:scaleX(0.9746);color:#111;">Feb</span><span class="t" style="left:1026.03px;top:529px;font-size:11.38px;line-height:12px;color:#111;">2011</span>
<span class="t" style="left:1065.51px;top:529px;font-size:11.38px;line-height:12px;transform:scaleX(1.0719);color:#111;">Apr</span><span class="t" style="left:1087.81px;top:529px;font-size:11.38px;line-height:12px;transform:scaleX(0.9884);color:#111;">2011</span>
<span class="t" style="left:1127.17px;top:529px;font-size:11.38px;line-height:12px;transform:scaleX(0.9782);color:#111;">Jun</span><span class="t" style="left:1148.78px;top:529px;font-size:11.38px;line-height:12px;transform:scaleX(0.9864);color:#111;">2011</span>
<span class="t" style="left:1188.25px;top:529px;font-size:11.38px;line-height:12px;transform:scaleX(1.0102);color:#111;">Aug</span><span class="t" style="left:1211.43px;top:529px;font-size:11.38px;line-height:12px;transform:scaleX(0.9635);color:#111;">2011</span>
<span class="t" style="left:1249.39px;top:529px;font-size:11.38px;line-height:12px;transform:scaleX(1.0428);color:#111;">Oct</span><span class="t" style="left:1271.46px;top:529px;font-size:11.38px;line-height:12px;transform:scaleX(1.0140);color:#111;">2011</span>
<span class="t" style="left:1310.06px;top:529px;font-size:11.38px;line-height:12px;color:#111;">Dec</span><span class="t" style="left:1333.57px;top:529px;font-size:11.38px;line-height:12px;transform:scaleX(1.0062);color:#111;">2011</span>
<span class="t" style="left:1371.98px;top:529px;font-size:11.38px;line-height:12px;transform:scaleX(0.9315);color:#111;">Feb</span><span class="t" style="left:1393.56px;top:529px;font-size:11.38px;line-height:12px;transform:scaleX(0.9829);color:#111;">2012</span>
<span class="t" style="left:1434.03px;top:529px;font-size:11.38px;line-height:12px;transform:scaleX(1.0300);color:#111;">Apr</span><span class="t" style="left:1455.33px;top:529px;font-size:11.38px;line-height:12px;transform:scaleX(0.9788);color:#111;">2013</span>
<span class="t" style="left:1494.90px;top:529px;font-size:11.38px;line-height:12px;transform:scaleX(0.9905);color:#111;">Aug</span><span class="t" style="left:1517.50px;top:529px;font-size:11.38px;line-height:12px;transform:scaleX(0.9737);color:#111;">2013</span>
<span class="t" style="left:1555.98px;top:529px;font-size:11.38px;line-height:12px;transform:scaleX(0.9548);color:#111;">Dec</span><span class="t" style="left:1578.24px;top:529px;font-size:11.38px;line-height:12px;transform:scaleX(0.9878);color:#111;">2013</span>
<span class="t" style="left:1618.51px;top:529px;font-size:11.38px;line-height:12px;transform:scaleX(0.9404);color:#111;">Jun</span><span class="t" style="left:1639.11px;top:529px;font-size:11.38px;line-height:12px;transform:scaleX(0.9815);color:#111;">2015</span>
<span class="t" style="left:1679.16px;top:529px;font-size:11.38px;line-height:12px;transform:scaleX(0.9904);color:#111;">Aug</span><span class="t" style="left:1701.71px;top:529px;font-size:11.38px;line-height:12px;transform:scaleX(0.9778);color:#111;">2015</span>
<span class="t" style="left:1741.56px;top:529px;font-size:11.38px;line-height:12px;transform:scaleX(0.9048);color:#111;">Jan</span><span class="t" style="left:1761.64px;top:529px;font-size:11.38px;line-height:12px;transform:scaleX(0.9796);color:#111;">2018</span>
<span class="t" style="left:1800.56px;top:529px;font-size:11.38px;line-height:12px;color:#111;">May</span><span class="t" style="left:1824.90px;top:529px;font-size:11.38px;line-height:12px;color:#111;">2020</span>
<span class="t" style="left:1382.14px;top:544px;font-size:13.45px;line-height:15px;font-weight:700;transform:scaleX(1.0341);color:#000;">CreatedDateTime</span>
<span class="t" style="left:964.20px;top:369.61px;font-size:13.45px;font-weight:700;color:#000;transform:rotate(-90deg) scaleX(0.9977);transform-origin:19.60px 6.59px">Count</span>
</div>
<span class="t" style="left:559.11px;top:675px;font-size:11.38px;line-height:12px;transform:scaleX(0.9607);color:#444;">Last</span>
<div class="abs" style="left:589px;top:666px;width:169px;height:29px;border:1px solid #b4b4c8;background:#fff"></div>
<span class="t" style="left:596.56px;top:673px;font-size:13.45px;line-height:15px;color:#333;">1</span>
<svg style="left:734.8px;top:676.500px" width="12" height="9" viewBox="0 0 12 9"><path d="M1.200 1.700L6 6.300 10.800 1.700" fill="none" stroke="#444" stroke-width="2.400"/></svg>
<div class="abs" style="left:766px;top:666px;width:169px;height:29px;border:1px solid #b4b4c8;background:#fff"></div>
<span class="t" style="left:774.51px;top:673px;font-size:13.45px;line-height:15px;transform:scaleX(1.0847);color:#333;">months</span>
<svg style="left:911.8px;top:676.500px" width="12" height="9" viewBox="0 0 12 9"><path d="M1.200 1.700L6 6.300 10.800 1.700" fill="none" stroke="#444" stroke-width="2.400"/></svg>
<div class="abs" style="left:962px;top:690px;width:919px;height:1px;background:#e4e8ec"></div><div class="row" style="top:691px;background:#dbe4ec"></div>
<div class="row" style="top:775px;background:#f2f2f2"></div>
<div class="row" style="top:859px;height:5px;background:#f2f2f2"></div>
<span class="t" style="left:988.51px;top:670px;font-size:13.45px;line-height:15px;transform:scaleX(1.0077);color:#333;-webkit-text-stroke:0.3px #333;">Log</span><span class="t" style="left:1013.64px;top:670px;font-size:13.45px;line-height:15px;transform:scaleX(1.0584);color:#333;-webkit-text-stroke:0.3px #333;">Entry</span><span class="t" style="left:1050.64px;top:670px;font-size:13.45px;line-height:15px;transform:scaleX(1.0675);color:#333;-webkit-text-stroke:0.3px #333;">Id</span>
<span class="t" style="left:1088.51px;top:670px;font-size:13.45px;line-height:15px;transform:scaleX(1.0077);color:#333;-webkit-text-stroke:0.3px #333;">Log</span><span class="t" style="left:1113.87px;top:670px;font-size:13.45px;line-height:15px;transform:scaleX(1.0558);color:#333;-webkit-text-stroke:0.3px #333;">Time</span>
<span class="t" style="left:1234.01px;top:670px;font-size:13.45px;line-height:15px;transform:scaleX(1.0077);color:#333;-webkit-text-stroke:0.3px #333;">Log</span><span class="t" style="left:1259.76px;top:670px;font-size:13.45px;line-height:15px;transform:scaleX(0.9593);color:#333;-webkit-text-stroke:0.3px #333;">DB</span><span class="t" style="left:1280.85px;top:670px;font-size:13.45px;line-height:15px;transform:scaleX(1.0558);color:#333;-webkit-text-stroke:0.3px #333;">Time</span>
<span class="t" style="left:1378.99px;top:670px;font-size:13.45px;line-height:15px;transform:scaleX(1.0507);color:#333;-webkit-text-stroke:0.3px #333;">Client</span><span class="t" style="left:1419.43px;top:670px;font-size:13.45px;line-height:15px;transform:scaleX(0.9405);color:#333;-webkit-text-stroke:0.3px #333;">IP</span><span class="t" style="left:1434.52px;top:670px;font-size:13.45px;line-height:15px;transform:scaleX(1.0042);color:#333;-webkit-text-stroke:0.3px #333;">Ad...</span>
<span class="t" style="left:1479.17px;top:670px;font-size:13.45px;line-height:15px;transform:scaleX(0.9764);color:#333;-webkit-text-stroke:0.3px #333;">Sub</span><span class="t" style="left:1505.75px;top:670px;font-size:13.45px;line-height:15px;transform:scaleX(1.0119);color:#333;-webkit-text-stroke:0.3px #333;">System</span><span class="t" style="left:1555.18px;top:670px;font-size:13.45px;line-height:15px;transform:scaleX(1.0675);color:#333;-webkit-text-stroke:0.3px #333;">Id</span>
<span class="t" style="left:1644.85px;top:670px;font-size:13.45px;line-height:15px;transform:scaleX(1.0308);color:#333;-webkit-text-stroke:0.3px #333;">Login</span><span class="t" style="left:1682.42px;top:670px;font-size:13.45px;line-height:15px;transform:scaleX(1.0675);color:#333;-webkit-text-stroke:0.3px #333;">Id</span>
<span class="t" style="left:1744.72px;top:670px;font-size:13.45px;line-height:15px;transform:scaleX(1.0813);color:#333;-webkit-text-stroke:0.3px #333;">Tenant</span><span class="t" style="left:1792.37px;top:670px;font-size:13.45px;line-height:15px;transform:scaleX(1.0675);color:#333;-webkit-text-stroke:0.3px #333;">Id</span>
<span class="t" style="left:1844.00px;top:670px;font-size:13.45px;line-height:15px;transform:scaleX(1.0712);color:#333;-webkit-text-stroke:0.3px #333;">Error</span>
<span class="t" style="left:988.54px;top:705px;font-size:13.45px;line-height:15px;color:#444;">75fae7595d...</span>
<span class="t" style="left:1088.78px;top:705px;font-size:13.45px;line-height:15px;transform:scaleX(1.0418);color:#444;">11/08/2024</span><span class="t" style="left:1160.92px;top:705px;font-size:13.45px;line-height:15px;transform:scaleX(0.9784);color:#444;">12:36</span><span class="t" style="left:1197.44px;top:705px;font-size:13.45px;line-height:15px;transform:scaleX(0.9453);color:#444;">PM</span>
<span class="t" style="left:1234.28px;top:705px;font-size:13.45px;line-height:15px;transform:scaleX(1.0418);color:#444;">11/08/2024</span><span class="t" style="left:1306.40px;top:705px;font-size:13.45px;line-height:15px;transform:scaleX(0.9802);color:#444;">12:37</span><span class="t" style="left:1342.94px;top:705px;font-size:13.45px;line-height:15px;transform:scaleX(0.9453);color:#444;">PM</span>
<span class="t" style="left:1380.47px;top:705px;font-size:13.45px;line-height:15px;transform:scaleX(0.9404);color:#444;">ism-SSI-1116</span>
<span class="t" style="left:1478.91px;top:705px;font-size:13.45px;line-height:15px;color:#444;">WFStartupUpgrade</span>
<span class="t" style="left:1745.27px;top:705px;font-size:13.45px;line-height:15px;transform:scaleX(1.0280);color:#444;">tenant1-db7...</span>
<span class="t" style="left:1844.38px;top:705px;font-size:13.45px;line-height:15px;transform:scaleX(0.9200);color:#444;">EM</span>
<span class="t" style="left:988.77px;top:747px;font-size:13.45px;line-height:15px;transform:scaleX(0.9917);color:#444;">0d64573146...</span>
<span class="t" style="left:1088.78px;top:747px;font-size:13.45px;line-height:15px;transform:scaleX(1.0418);color:#444;">11/08/2024</span><span class="t" style="left:1160.92px;top:747px;font-size:13.45px;line-height:15px;transform:scaleX(0.9784);color:#444;">12:36</span><span class="t" style="left:1197.44px;top:747px;font-size:13.45px;line-height:15px;transform:scaleX(0.9453);color:#444;">PM</span>
<span class="t" style="left:1234.28px;top:747px;font-size:13.45px;line-height:15px;transform:scaleX(1.0418);color:#444;">11/08/2024</span><span class="t" style="left:1306.40px;top:747px;font-size:13.45px;line-height:15px;transform:scaleX(0.9802);color:#444;">12:37</span><span class="t" style="left:1342.94px;top:747px;font-size:13.45px;line-height:15px;transform:scaleX(0.9453);color:#444;">PM</span>
<span class="t" style="left:1380.47px;top:747px;font-size:13.45px;line-height:15px;transform:scaleX(0.9404);color:#444;">ism-SSI-1116</span>
<span class="t" style="left:1478.91px;top:747px;font-size:13.45px;line-height:15px;color:#444;">WFStartupUpgrade</span>
<span class="t" style="left:1745.27px;top:747px;font-size:13.45px;line-height:15px;transform:scaleX(1.0280);color:#444;">tenant1-db7...</span>
<span class="t" style="left:1844.38px;top:747px;font-size:13.45px;line-height:15px;transform:scaleX(0.9200);color:#444;">EM</span>
<span class="t" style="left:988.57px;top:789px;font-size:13.45px;line-height:15px;color:#444;">201bcbf725...</span>
<span class="t" style="left:1088.78px;top:789px;font-size:13.45px;line-height:15px;transform:scaleX(1.0418);color:#444;">11/08/2024</span><span class="t" style="left:1160.92px;top:789px;font-size:13.45px;line-height:15px;transform:scaleX(0.9784);color:#444;">12:36</span><span class="t" style="left:1197.44px;top:789px;font-size:13.45px;line-height:15px;transform:scaleX(0.9453);color:#444;">PM</span>
<span class="t" style="left:1234.28px;top:789px;font-size:13.45px;line-height:15px;transform:scaleX(1.0418);color:#444;">11/08/2024</span><span class="t" style="left:1306.40px;top:789px;font-size:13.45px;line-height:15px;transform:scaleX(0.9802);color:#444;">12:37</span><span class="t" style="left:1342.94px;top:789px;font-size:13.45px;line-height:15px;transform:scaleX(0.9453);color:#444;">PM</span>
<span class="t" style="left:1380.47px;top:789px;font-size:13.45px;line-height:15px;transform:scaleX(0.9404);color:#444;">ism-SSI-1116</span>
<span class="t" style="left:1478.91px;top:789px;font-size:13.45px;line-height:15px;color:#444;">WFStartupUpgrade</span>
<span class="t" style="left:1745.10px;top:789px;font-size:13.45px;line-height:15px;transform:scaleX(1.0331);color:#444;">itsm_primar...</span>
<span class="t" style="left:1844.38px;top:789px;font-size:13.45px;line-height:15px;transform:scaleX(0.9200);color:#444;">EM</span>
<span class="t" style="left:988.74px;top:831px;font-size:13.45px;line-height:15px;transform:scaleX(0.9817);color:#444;">e4dc87a874...</span>
<span class="t" style="left:1088.78px;top:831px;font-size:13.45px;line-height:15px;transform:scaleX(1.0418);color:#444;">11/08/2024</span><span class="t" style="left:1160.92px;top:831px;font-size:13.45px;line-height:15px;transform:scaleX(0.9784);color:#444;">12:36</span><span class="t" style="left:1197.44px;top:831px;font-size:13.45px;line-height:15px;transform:scaleX(0.9453);color:#444;">PM</span>
<span class="t" style="left:1234.28px;top:831px;font-size:13.45px;line-height:15px;transform:scaleX(1.0418);color:#444;">11/08/2024</span><span class="t" style="left:1306.40px;top:831px;font-size:13.45px;line-height:15px;transform:scaleX(0.9802);color:#444;">12:37</span><span class="t" style="left:1342.94px;top:831px;font-size:13.45px;line-height:15px;transform:scaleX(0.9453);color:#444;">PM</span>
<span class="t" style="left:1380.47px;top:831px;font-size:13.45px;line-height:15px;transform:scaleX(0.9404);color:#444;">ism-SSI-1116</span>
<span class="t" style="left:1478.91px;top:831px;font-size:13.45px;line-height:15px;color:#444;">WFStartupUpgrade</span>
<span class="t" style="left:1745.10px;top:831px;font-size:13.45px;line-height:15px;transform:scaleX(1.0331);color:#444;">itsm_primar...</span>
<span class="t" style="left:1844.38px;top:831px;font-size:13.45px;line-height:15px;transform:scaleX(0.9200);color:#444;">EM</span>
<div class="abs" style="left:1864px;top:691px;width:17px;height:173px;background:#f1f1f1"></div>
<svg style="left:1868.500px;top:697.500px" width="8" height="5" viewBox="0 0 8 5"><path d="M4 0.300L7.800 4.600H0.200Z" fill="#a3a3a3"/></svg>
<div class="abs" style="left:1866px;top:708px;width:13px;height:71px;background:#c1c1c1"></div>
<div class="abs" style="left:1882px;top:608px;width:21px;height:256px;background:#e5e5e5"></div>
<div class="abs" style="left:1903px;top:158px;width:17px;height:706px;background:#f1f1f1"></div>
<svg style="left:1907.500px;top:164.500px" width="8" height="5" viewBox="0 0 8 5"><path d="M4 0.200L7.800 4.600H0.200Z" fill="#a3a3a3"/></svg>
<div class="abs" style="left:1905px;top:175px;width:13px;height:283px;background:#c1c1c1"></div>
<svg style="left:1907.500px;top:852.500px" width="8" height="5" viewBox="0 0 8 5"><path d="M4 4.800L7.800 0.400H0.200Z" fill="#505050"/></svg>
<div class="abs" style="left:20px;top:864px;width:1883px;height:17px;background:#f1f1f1"></div>
<div class="abs" style="left:37px;top:866px;width:1845px;height:13px;background:#c1c1c1"></div>
<svg style="left:26px;top:868.500px" width="5" height="8" viewBox="0 0 5 8"><path d="M0.300 4L4.600 0.200V7.800Z" fill="#a3a3a3"/></svg>
<svg style="left:1892.500px;top:868.500px" width="5" height="8" viewBox="0 0 5 8"><path d="M4.700 4L0.400 0.200V7.800Z" fill="#505050"/></svg>
<div class="abs" style="left:1903px;top:864px;width:17px;height:17px;background:#dcdcdc"></div>
</body>
</html>
